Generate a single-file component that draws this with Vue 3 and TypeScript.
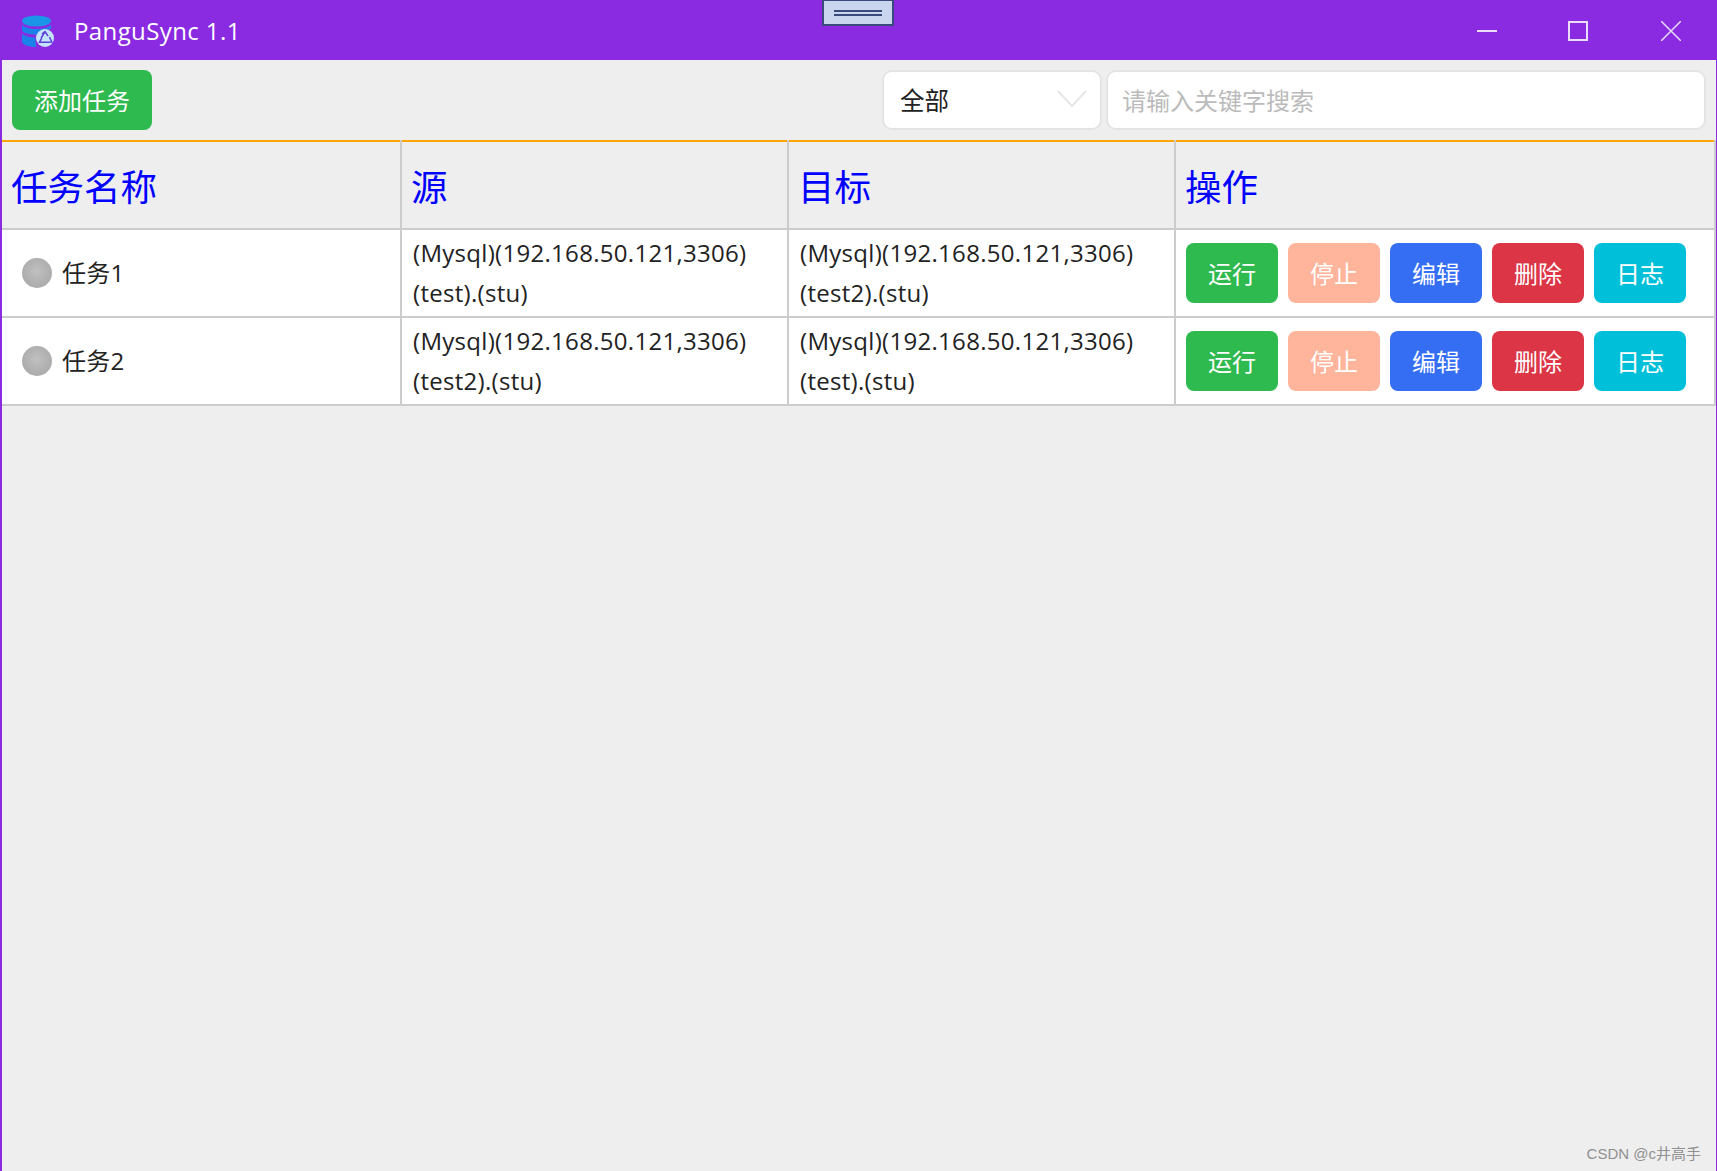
<script setup lang="ts">
import { ref } from "vue";

interface Task {
  name: string;
  source: string[];
  target: string[];
}

const tasks = ref<Task[]>([
  { name: "任务1", source: ["(Mysql)(192.168.50.121,3306)", "(test).(stu)"], target: ["(Mysql)(192.168.50.121,3306)", "(test2).(stu)"] },
  { name: "任务2", source: ["(Mysql)(192.168.50.121,3306)", "(test2).(stu)"], target: ["(Mysql)(192.168.50.121,3306)", "(test).(stu)"] },
]);

const actions = [
  { label: "运行", cls: "green" },
  { label: "停止", cls: "salmon" },
  { label: "编辑", cls: "blue" },
  { label: "删除", cls: "red" },
  { label: "日志", cls: "cyan" },
];

const keyword = ref("");
</script>

<template>
  <div class="window">
    <header class="titlebar">
      <div class="handle"><span></span><span></span></div>
      <svg class="logo" width="34" height="36" viewBox="0 0 34 36">
        <ellipse cx="14.500" cy="8" rx="14.500" ry="5.500" fill="#1b95e8" />
        <path d="M0 11.500c2 3 8 4.500 14.500 4.500S27 14.500 29 11.500V16c-3 .5-6 2-8 5-2 .5-4 .7-6.500.7C6.500 21.700 0 19.500 0 17z" fill="#1b82ea" />
        <path d="M0 21c3 2.300 8 3.500 13.500 3.700-.3 2.500 0 6 1 9.300C6.500 34 0 31.500 0 28.500z" fill="#1b82ea" />
        <circle cx="23" cy="25" r="9" fill="#c4e4fb" />
        <path d="M23 18.500l-3.800 6.500M20 21l3-2.500 3 4.500M27.500 24l2.300 5-4 .3M26 29.300h-8.500l2.200-4.300" fill="none" stroke="#5b3fd6" stroke-width="1.500" />
      </svg>
      <span class="title">PanguSync 1.1</span>
      <div class="controls">
        <svg width="20" height="20" viewBox="0 0 20 20"><path d="M0 10h20" stroke="#eadcfb" stroke-width="2" /></svg>
        <svg width="20" height="20" viewBox="0 0 20 20"><rect x="1" y="1" width="18" height="18" fill="none" stroke="#eadcfb" stroke-width="2" /></svg>
        <svg class="close" width="20" height="20" viewBox="0 0 20 20"><path d="M0 0l20 20M20 0L0 20" stroke="#eadcfb" stroke-width="1.500" /></svg>
      </div>
    </header>

    <div class="toolbar">
      <button class="btn green add">添加任务</button>
      <div class="search">
        <div class="select">
          <span>全部</span>
          <svg width="30" height="18" viewBox="0 0 30 18"><path d="M1 1l14 15L29 1" fill="none" stroke="#e6e6e6" stroke-width="2" /></svg>
        </div>
        <input v-model="keyword" class="keyword" type="text" placeholder="请输入关键字搜索" />
      </div>
    </div>

    <table class="tasks">
      <colgroup>
        <col style="width: 399px" />
        <col style="width: 387px" />
        <col style="width: 387px" />
        <col />
      </colgroup>
      <thead>
        <tr>
          <th>任务名称</th>
          <th>源</th>
          <th>目标</th>
          <th>操作</th>
        </tr>
      </thead>
      <tbody>
        <tr v-for="task in tasks" :key="task.name">
          <td>
            <div class="name"><i class="ball"></i>{{ task.name }}</div>
          </td>
          <td class="endpoint"><div v-for="line in task.source" :key="line">{{ line }}</div></td>
          <td class="endpoint"><div v-for="line in task.target" :key="line">{{ line }}</div></td>
          <td>
            <div class="actions">
              <button v-for="a in actions" :key="a.label" class="btn" :class="a.cls">{{ a.label }}</button>
            </div>
          </td>
        </tr>
      </tbody>
    </table>

    <div class="watermark">CSDN @c井高手</div>
  </div>
</template>

<style scoped>
.window {
  position: relative;
  height: 1171px;
  box-sizing: border-box;
  background: #eeeeee;
  border-left: 2px solid #8a2be2;
  border-right: 1px solid #8a2be2;
  font-family: "Open Sans", "Noto Sans CJK SC", sans-serif;
  color: #222;
  overflow: hidden;
}

.titlebar {
  position: relative;
  height: 60px;
  margin: 0 -1px 0 -2px;
  background: #8a2be2;
  display: flex;
  align-items: center;
  padding-left: 22px;
  color: #fff;
}

.handle {
  position: absolute;
  left: 822px;
  top: 0;
  width: 72px;
  height: 26px;
  box-sizing: border-box;
  background: #cad5ee;
  border: 2px solid #3a4a7a;
  border-top-width: 1px;
  display: flex;
  flex-direction: column;
  align-items: center;
  justify-content: center;
  gap: 2px;
}

.handle span {
  width: 48px;
  height: 2px;
  background: #3a4a7a;
}

.logo {
  flex: none;
  margin-top: 2px;
}

.title {
  margin-left: 18px;
  font-size: 24px;
  letter-spacing: 0.4px;
}

.controls {
  margin-left: auto;
  margin-top: 2px;
  display: flex;
  gap: 71px;
  padding-right: 36px;
}

.close {
  margin-left: 2px;
}

.toolbar {
  height: 80px;
  box-sizing: border-box;
  display: flex;
  align-items: center;
  justify-content: space-between;
  padding: 0 10px;
}

.search {
  display: flex;
  gap: 4px;
}

.select,
.keyword {
  height: 60px;
  box-sizing: border-box;
  background: #fff;
  border: 2px solid #e4e4e4;
  border-radius: 10px;
  font-family: inherit;
  font-size: 24px;
}

.select {
  width: 220px;
  display: flex;
  align-items: center;
  justify-content: space-between;
  padding: 0 13px 2px 16px;
  font-size: 24.500px;
}

.keyword {
  width: 600px;
  padding: 0 14px;
  outline: none;
  color: #222;
}

.keyword::placeholder {
  color: #bbb;
}

.tasks {
  width: 1714px;
  table-layout: fixed;
  border-collapse: collapse;
  border-top: 2px solid #ffa500;
}

th,
td {
  border: 2px solid #ccc;
  padding: 0 10px;
  text-align: left;
  font-weight: normal;
}

thead tr:first-child th {
  border-top: none;
}

th {
  height: 86px;
  padding-left: 9px;
  font-size: 36.500px;
  color: #0000ff;
  background: #eeeeee;
}

td {
  height: 86px;
  background: #fff;
  font-size: 24px;
  line-height: 40px;
  letter-spacing: 0.3px;
}

td.endpoint {
  padding-left: 11px;
}

th:first-child,
td:first-child {
  border-left: none;
}

.name {
  display: flex;
  align-items: center;
  gap: 10px;
  padding-left: 10px;
}

.ball {
  width: 30px;
  height: 30px;
  border-radius: 50%;
  background: radial-gradient(circle at 50% 45%, #c0c0c0, #a6a6a6 90%);
}

.actions {
  display: flex;
  gap: 10px;
}

.btn {
  width: 92px;
  height: 60px;
  border: none;
  border-radius: 8px;
  color: #fff;
  font-family: inherit;
  font-size: 24px;
  padding: 0 0 2px;
  letter-spacing: 0;
}

.add {
  width: 140px;
}

.green {
  background: #2fba50;
}

.salmon {
  background: #ffb59b;
}

.blue {
  background: #356ef3;
}

.red {
  background: #dc3545;
}

.cyan {
  background: #00bfd8;
}

.watermark {
  position: absolute;
  right: 15px;
  bottom: 8px;
  font-family: "Liberation Sans", "Noto Sans CJK SC", sans-serif;
  font-size: 15px;
  color: #909090;
}
</style>
